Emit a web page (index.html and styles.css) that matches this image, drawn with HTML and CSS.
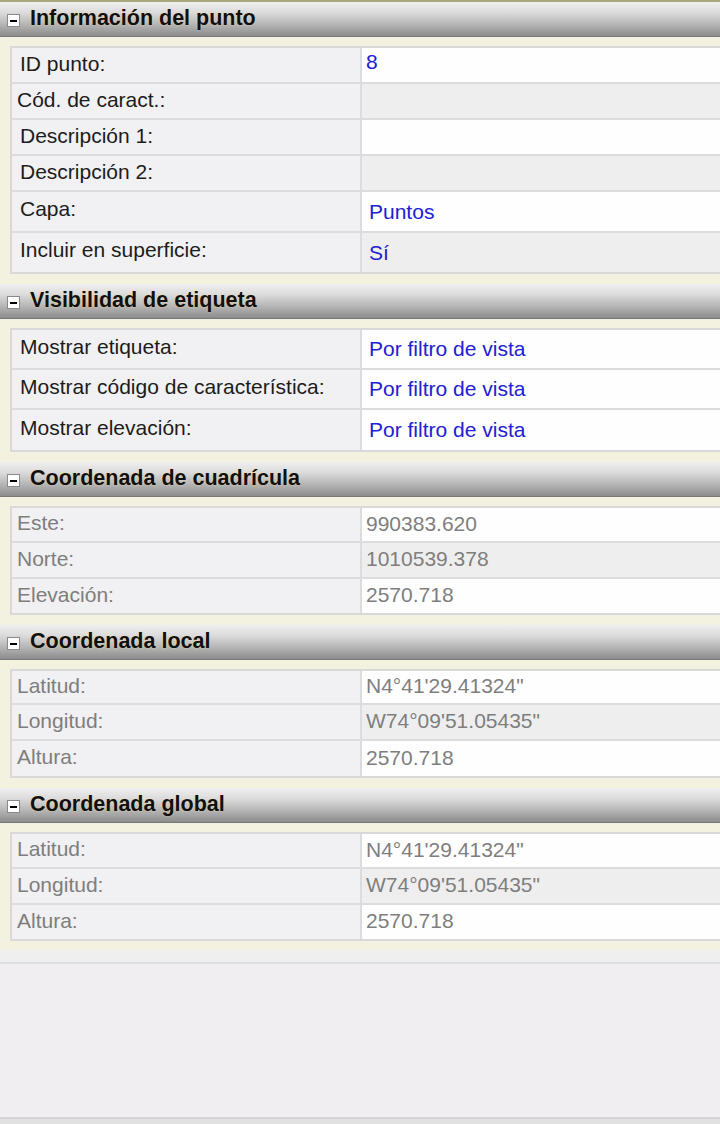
FILE: index.html
```html
<!DOCTYPE html>
<html lang="es">
<head>
<meta charset="utf-8">
<title>Propiedades del punto</title>
<link rel="stylesheet" href="styles.css">
</head>
<body>
<div class="panel">
  <section class="sec sec-first">
    <div class="hdr"><span class="tog"></span><span class="ttl">Información del punto</span></div>
    <div class="body">
      <div class="grid">
        <div class="row h34"><div class="lab">ID punto:</div><div class="val blue v-up">8</div></div>
        <div class="row alt h34"><div class="lab lab-l">Cód. de caract.:</div><div class="val"></div></div>
        <div class="row h34"><div class="lab">Descripción 1:</div><div class="val"></div></div>
        <div class="row alt h34"><div class="lab">Descripción 2:</div><div class="val"></div></div>
        <div class="row h39"><div class="lab lab-up">Capa:</div><div class="val blue">Puntos</div></div>
        <div class="row alt h39"><div class="lab lab-up">Incluir en superficie:</div><div class="val blue">Sí</div></div>
      </div>
    </div>
  </section>

  <section class="sec">
    <div class="hdr"><span class="tog"></span><span class="ttl">Visibilidad de etiqueta</span></div>
    <div class="body">
      <div class="grid">
        <div class="row h38"><div class="lab lab-up">Mostrar etiqueta:</div><div class="val blue">Por filtro de vista</div></div>
        <div class="row h38"><div class="lab lab-up">Mostrar código de característica:</div><div class="val blue">Por filtro de vista</div></div>
        <div class="row h40"><div class="lab lab-up">Mostrar elevación:</div><div class="val blue">Por filtro de vista</div></div>
      </div>
    </div>
  </section>

  <section class="sec">
    <div class="hdr"><span class="tog"></span><span class="ttl">Coordenada de cuadrícula</span></div>
    <div class="body">
      <div class="grid ro">
        <div class="row h33"><div class="lab lab-l">Este:</div><div class="val">990383.620</div></div>
        <div class="row alt h34"><div class="lab lab-l">Norte:</div><div class="val">1010539.378</div></div>
        <div class="row h34"><div class="lab lab-l">Elevación:</div><div class="val">2570.718</div></div>
      </div>
    </div>
  </section>

  <section class="sec">
    <div class="hdr"><span class="tog"></span><span class="ttl">Coordenada local</span></div>
    <div class="body">
      <div class="grid ro">
        <div class="row h32"><div class="lab lab-l">Latitud:</div><div class="val">N4°41'29.41324"</div></div>
        <div class="row alt h34"><div class="lab lab-l">Longitud:</div><div class="val">W74°09'51.05435"</div></div>
        <div class="row h35"><div class="lab lab-l">Altura:</div><div class="val">2570.718</div></div>
      </div>
    </div>
  </section>

  <section class="sec sec-last">
    <div class="hdr"><span class="tog"></span><span class="ttl">Coordenada global</span></div>
    <div class="body">
      <div class="grid ro">
        <div class="row h33"><div class="lab lab-l">Latitud:</div><div class="val">N4°41'29.41324"</div></div>
        <div class="row alt h34"><div class="lab lab-l">Longitud:</div><div class="val">W74°09'51.05435"</div></div>
        <div class="row h34"><div class="lab lab-l">Altura:</div><div class="val">2570.718</div></div>
      </div>
    </div>
  </section>

  <div class="empty"></div>
  <div class="foot"></div>
</div>
</body>
</html>
```

FILE: styles.css
```css
html, body {
  margin: 0;
  padding: 0;
}
body {
  width: 720px;
  height: 1124px;
  overflow: hidden;
  background: #f0eef0;
  font-family: "Liberation Sans", Arial, sans-serif;
  font-size: 21px;
  color: #1c1c1c;
}
.panel {
  display: flex;
  flex-direction: column;
  height: 1124px;
}
.sec {
  background: #f3f1df;
}
.sec-first {
  border-top: 2px solid #a9a77c;
}
.hdr {
  height: 34px;
  display: flex;
  align-items: center;
  background: linear-gradient(to bottom, #efefef 0%, #dcdcdc 30%, #b6b6b6 65%, #8c8c8c 100%);
  border-bottom: 1px solid #7a7a7a;
}
.tog {
  width: 11px;
  height: 11px;
  margin: 3px 10px 0 7px;
  background: #fff;
  border: 1px solid #8a8a8a;
  position: relative;
  flex: none;
}
.tog::after {
  content: "";
  position: absolute;
  left: 2px;
  right: 2px;
  top: 5px;
  height: 2px;
  background: #000;
}
.ttl {
  font-weight: bold;
  font-size: 21.5px;
  color: #101010;
  text-shadow: 0 0 2px rgba(255, 225, 170, 0.7);
  margin-top: -1px;
}
.body {
  padding: 9px 0 10px 10px;
}
.sec-last .body {
  padding-bottom: 9px;
}
.grid {
  border-top: 2px solid #d9d9d9;
  border-left: 2px solid #d9d9d9;
  border-bottom: 2px solid #d9d9d9;
  display: flex;
  flex-direction: column;
}
.row {
  display: grid;
  grid-template-columns: 350px 1fr;
  border-bottom: 2px solid #dcdcdc;
}
.row:last-child {
  border-bottom: none;
}
.h32 { height: 32px; }
.h33 { height: 33px; }
.h34 { height: 34px; }
.h35 { height: 35px; }
.h38 { height: 38px; }
.h39 { height: 39px; }
.h40 { height: 40px; }
.lab {
  background: #f1f0f2;
  border-right: 2px solid #dcdcdc;
  padding: 0 0 3px 8px;
  display: flex;
  align-items: center;
  white-space: nowrap;
}
.lab.lab-l {
  padding-left: 5px;
}
.lab.lab-up {
  padding-bottom: 5px;
}
.val {
  background: #fefefe;
  padding: 0 0 2px 4px;
  display: flex;
  align-items: center;
  white-space: nowrap;
}
.row.alt .val {
  background: #efeeef;
}
.blue {
  color: #2020d4;
}
.row .val.blue {
  padding-left: 7px;
  padding-bottom: 0;
}
.row .val.v-up {
  padding-left: 4px;
  padding-bottom: 6px;
}
.ro .lab,
.ro .val {
  color: #7e7e7e;
}
.empty {
  flex: 1;
  background: #f0eef0;
  border-top: 12px solid #efefef;
  box-shadow: inset 0 2px 0 #dadfe2;
}
.foot {
  height: 5px;
  background: #e2e1e2;
  border-top: 2px solid #d4d4d4;
}
```
